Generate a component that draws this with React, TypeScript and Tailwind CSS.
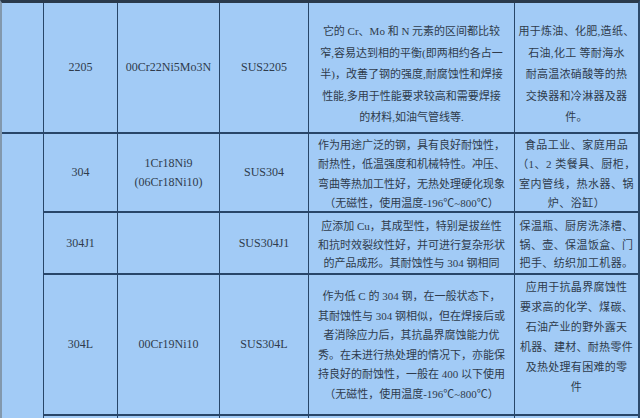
const font = { fontFamily: '"Liberation Serif", "Noto Sans CJK SC", serif' };

function Lines({ lines }: { lines: string[] }) {
  return (
    <>
      {lines.map((line, i) => (
        <div key={i} className="whitespace-nowrap">
          {line}
        </div>
      ))}
    </>
  );
}

function Code({ children }: { children: React.ReactNode }) {
  return (
    <div className="bg-[#a2cbf6] flex flex-col items-center justify-center text-[12px] leading-[19px] text-center">
      {children}
    </div>
  );
}

export default function App() {
  return (
    <div className="w-[640px] h-[418px] overflow-hidden bg-[#a2cbf6]">
      <div
        style={font}
        className="grid grid-cols-[41px_73px_101px_88px_205px_123px] grid-rows-[129px_77px_60px_139px_40px] gap-x-px gap-y-[2px] bg-[#284669] border-t-[3px] border-t-[#2a3a4c] border-l-2 border-l-[#8298ad] border-r-2 border-r-[#2c4a6c] text-[#2f3b4c]"
      >
        {/* 2205 */}
        <div className="bg-[#a2cbf6]" />
        <Code>2205</Code>
        <Code>00Cr22Ni5Mo3N</Code>
        <Code>SUS2205</Code>
        <div className="bg-[#a2cbf6] flex flex-col items-center pt-[18px] text-[11px] leading-[21.6px]">
          <Lines
            lines={[
              "它的 Cr、Mo 和 N 元素的区间都比较",
              "窄,容易达到相的平衡(即两相约各占一",
              "半)，改善了钢的强度,耐腐蚀性和焊接",
              "性能,多用于性能要求较高和需要焊接",
              "的材料,如油气管线等.",
            ]}
          />
        </div>
        <div className="bg-[#a2cbf6] flex flex-col items-center pt-[18px] text-[11px] leading-[21.6px] tracking-[0.3px]">
          <Lines
            lines={[
              "用于炼油、化肥,造纸、",
              "石油,化工 等耐海水",
              "耐高温浓硝酸等的热",
              "交换器和冷淋器及器",
              "件。",
            ]}
          />
        </div>

        {/* merged left column */}
        <div className="bg-[#a2cbf6] row-span-4" />

        {/* 304 */}
        <Code>304</Code>
        <Code>
          <div>1Cr18Ni9</div>
          <div>(06Cr18Ni10)</div>
        </Code>
        <Code>SUS304</Code>
        <div className="bg-[#a2cbf6] flex flex-col items-center pt-[2px] text-[11px] leading-[19.3px]">
          <Lines
            lines={[
              "作为用途广泛的钢，具有良好耐蚀性，",
              "耐热性，低温强度和机械特性。冲压、",
              "弯曲等热加工性好，无热处理硬化现象",
              "（无磁性，使用温度-196℃~800℃）",
            ]}
          />
        </div>
        <div className="bg-[#a2cbf6] flex flex-col items-center pt-[2px] text-[11px] leading-[19.3px] tracking-[0.5px]">
          <Lines
            lines={[
              "食品工业、家庭用品",
              "（1、2 类餐具、厨柜，",
              "室内管线，热水器、锅",
              "炉、浴缸）",
            ]}
          />
        </div>

        {/* 304J1 */}
        <Code>304J1</Code>
        <Code>{""}</Code>
        <Code>SUS304J1</Code>
        <div className="bg-[#a2cbf6] flex flex-col items-center pt-[4px] text-[11px] leading-[18.5px]">
          <Lines
            lines={[
              "应添加 Cu，其成型性，特别是拔丝性",
              "和抗时效裂纹性好，并可进行复杂形状",
              "的产品成形。其耐蚀性与 304 钢相同",
            ]}
          />
        </div>
        <div className="bg-[#a2cbf6] flex flex-col items-center pt-[4px] text-[11px] leading-[18.5px] tracking-[0.4px]">
          <Lines
            lines={[
              "保温瓶、厨房洗涤槽、",
              "锅、壶、保温饭盒、门",
              "把手、纺织加工机器。",
            ]}
          />
        </div>

        {/* 304L */}
        <Code>304L</Code>
        <Code>00Cr19Ni10</Code>
        <Code>SUS304L</Code>
        <div className="bg-[#a2cbf6] flex flex-col items-center pt-[12px] text-[11px] leading-[19.6px]">
          <Lines
            lines={[
              "作为低 C 的 304 钢，在一般状态下，",
              "其耐蚀性与 304 钢相似，但在焊接后或",
              "者消除应力后，其抗晶界腐蚀能力优",
              "秀。在未进行热处理的情况下，亦能保",
              "持良好的耐蚀性，一般在 400 以下使用",
              "（无磁性，使用温度-196℃~800℃）",
            ]}
          />
        </div>
        <div className="bg-[#a2cbf6] flex flex-col items-center pt-[2px] text-[11px] leading-[20px] tracking-[0.3px]">
          <Lines
            lines={[
              "应用于抗晶界腐蚀性",
              "要求高的化学、煤碳、",
              "石油产业的野外露天",
              "机器、建材、耐热零件",
              "及热处理有困难的零",
              "件",
            ]}
          />
        </div>

        {/* next row, cut off */}
        <div className="bg-[#a2cbf6]" />
        <div className="bg-[#a2cbf6]" />
        <div className="bg-[#a2cbf6]" />
        <div className="bg-[#a2cbf6]" />
        <div className="bg-[#a2cbf6]" />
      </div>
    </div>
  );
}
